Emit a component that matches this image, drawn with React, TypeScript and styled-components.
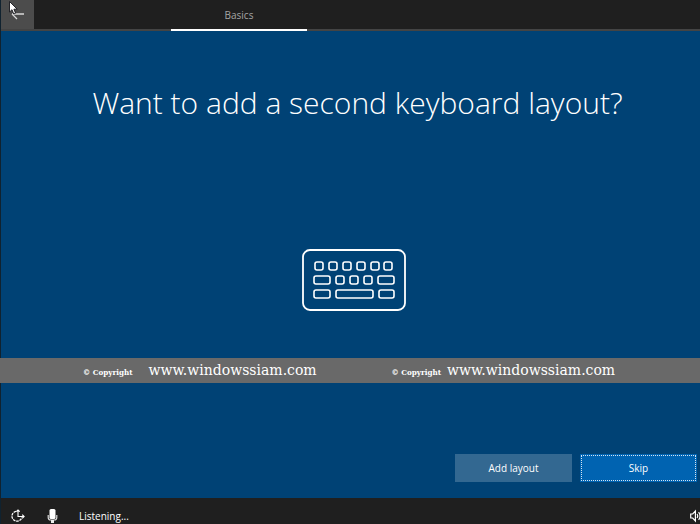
import React from "react";
import styled, { createGlobalStyle } from "styled-components";

const Global = createGlobalStyle`
  * { box-sizing: border-box; }
  body { margin: 0; background: #1f1f1f; overflow: hidden; }
`;

const Screen = styled.div`
  min-height: 100vh;
  display: flex;
  flex-direction: column;
  background: #004275;
  border-left: 1px solid #10222f;
  color: #fff;
  font-family: "Open Sans", "Noto Sans", sans-serif;
`;

const TopBar = styled.header`
  display: flex;
  height: 31px;
  background: #1f1f1f;
  border-bottom: 2px solid #444;
`;

const BackButton = styled.button`
  width: 33px;
  height: 29px;
  padding: 0;
  border: 0;
  background: #4c4c4c;
  display: block;

  svg { display: block; }
`;

const Tabs = styled.nav`
  display: flex;
  margin-left: 137px;
  height: 31px;
`;

const Tab = styled.a`
  width: 136px;
  height: 31px;
  border-bottom: 2px solid #fff;
  color: #a5a5a5;
  font-size: 10px;
  line-height: 30px;
  text-align: center;
  text-decoration: none;
`;

const Main = styled.main`
  flex: 1;
  display: flex;
  flex-direction: column;
`;

const Title = styled.h1`
  margin: 48px 0 0;
  padding-left: 14px;
  font-size: 30px;
  font-weight: 300;
  line-height: 48px;
  text-align: center;
`;

const Illustration = styled.div`
  display: flex;
  justify-content: center;
  margin-top: 122px;
  padding-left: 6px;

  svg { display: block; }
`;

const Band = styled.div`
  display: grid;
  grid-template-columns: 1fr 1fr;
  height: 25px;
  margin: 47px 0 0 -1px;
  padding-left: 83px;
  background: #696969;
`;

const Mark = styled.div<{ $gap: number }>`
  display: flex;
  align-items: baseline;
  gap: ${(p) => p.$gap}px;
  line-height: 25px;
  white-space: nowrap;
`;

const Notice = styled.span`
  font-family: "DejaVu Serif Condensed", "DejaVu Serif", serif;
  font-size: 8px;
  font-weight: 700;
`;

const Site = styled.span`
  font-family: "DejaVu Serif", serif;
  font-size: 14px;
`;

const Actions = styled.div`
  display: flex;
  justify-content: flex-end;
  gap: 8px;
  margin-top: auto;
  padding: 0 3px 16px 0;
`;

const ActionButton = styled.button<{ $primary?: boolean }>`
  width: 117px;
  height: 28px;
  padding: 0;
  border: 0;
  background: ${(p) => (p.$primary ? "#0063b1" : "#336891")};
  outline: ${(p) => (p.$primary ? "1px dotted #d5e4f1" : "none")};
  outline-offset: -2px;
  color: #fff;
  font-family: inherit;
  font-size: 10px;
  line-height: 28px;
`;

const BottomBar = styled.footer`
  display: flex;
  align-items: center;
  height: 26px;
  padding: 10px 0 0 10px;
  background: #1f1f1f;
  overflow: hidden;

  svg { display: block; flex: none; }
`;

const IconButton = styled.button<{ $end?: boolean }>`
  padding: 0;
  border: 0;
  background: none;
  margin-left: ${(p) => (p.$end ? "auto" : "0")};
  margin-right: ${(p) => (p.$end ? "-5px" : "21px")};
`;

const Status = styled.span`
  font-size: 10px;
  line-height: 16px;
`;

const BackArrow = () => (
  <svg width="33" height="29" viewBox="0 0 33 29" fill="none">
    <path d="M11 14H23M11 14l5 5" stroke="#d8d8d8" strokeWidth="1.3" />
    <path d="M8.500 1.500v10.500l2.500-2.300 1.700 4.300 1.900-.8-1.700-4h3.300z" fill="#fff" stroke="#16161c" strokeWidth=".9" />
  </svg>
);

const topKeys = [13, 27, 41, 55, 69, 82];
const middleKeys = [34, 48, 62];

const Keyboard = () => (
  <svg width="104" height="62" viewBox="0 0 104 62" fill="none" stroke="#fff" strokeWidth="1.6">
    <rect x="1" y="1" width="102" height="60" rx="7" strokeWidth="1.8" />
    {topKeys.map((x) => (
      <rect key={x} x={x} y="13" width="8" height="8" rx="2" />
    ))}
    <rect x="12" y="27" width="16" height="8" rx="2" />
    {middleKeys.map((x) => (
      <rect key={x} x={x} y="27" width="8" height="8" rx="2" />
    ))}
    <rect x="76" y="27" width="16" height="8" rx="2" />
    <rect x="12" y="41" width="16" height="8" rx="2" />
    <rect x="34" y="41" width="37" height="8" rx="2" />
    <rect x="77" y="41" width="15" height="8" rx="2" />
  </svg>
);

const EaseOfAccess = () => (
  <svg width="15" height="14" viewBox="0 0 15 14" fill="none" stroke="#fff">
    <path d="M5 2.300A5 5 0 1 0 10.800 8.500" strokeWidth="1.300" strokeDasharray="2.600 .8" />
    <path d="M7 1v6.500H13M11.200 5.700l1.900 1.800-1.900 1.800M5.300 2.700L7 1l1.700 1.700" strokeWidth="1.100" />
  </svg>
);

const Microphone = () => (
  <svg width="11" height="14" viewBox="0 0 11 14" fill="none">
    <rect x="2.500" y="0" width="6" height="10" rx="1.500" fill="#fff" />
    <path d="M1.200 6v2.500q0 2.500 2.500 2.500h3.600q2.500 0 2.500-2.500V6" stroke="#ddd" strokeWidth="1.200" />
    <path d="M4 11h3v3H4z" fill="#eee" />
  </svg>
);

const Speaker = () => (
  <svg width="15" height="14" viewBox="0 0 15 14" fill="none" stroke="#fff" strokeWidth="1.200">
    <path d="M.7 5h2L5.400 2v10L2.700 9h-2zM7 5q1.500 2 0 4M8.600 3.200q3 3.800 0 7.600M10.500 1.500q4.500 5.500 0 11" />
  </svg>
);

export default function App() {
  return (
    <>
      <Global />
      <Screen>
        <TopBar>
          <BackButton aria-label="Back"><BackArrow /></BackButton>
          <Tabs><Tab href="#basics">Basics</Tab></Tabs>
        </TopBar>
        <Main>
          <Title>Want to add a second keyboard layout?</Title>
          <Illustration><Keyboard /></Illustration>
          <Band>
            <Mark $gap={16}><Notice>© Copyright</Notice><Site>www.windowssiam.com</Site></Mark>
            <Mark $gap={6}><Notice>© Copyright</Notice><Site>www.windowssiam.com</Site></Mark>
          </Band>
          <Actions>
            <ActionButton>Add layout</ActionButton>
            <ActionButton $primary>Skip</ActionButton>
          </Actions>
        </Main>
        <BottomBar>
          <IconButton aria-label="Ease of access"><EaseOfAccess /></IconButton>
          <IconButton aria-label="Microphone"><Microphone /></IconButton>
          <Status>Listening...</Status>
          <IconButton $end aria-label="Volume"><Speaker /></IconButton>
        </BottomBar>
      </Screen>
    </>
  );
}
